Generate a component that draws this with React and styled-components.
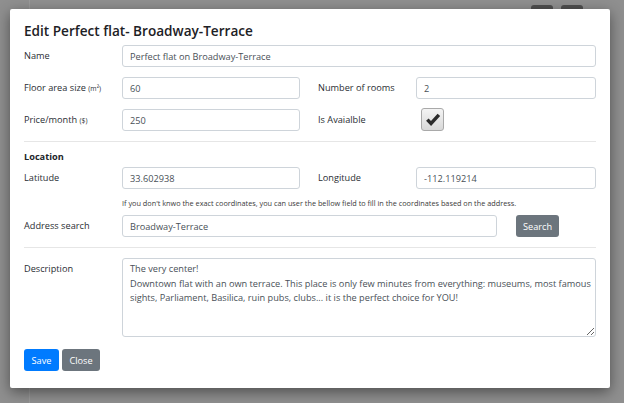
import React from "react";
import styled, { createGlobalStyle } from "styled-components";

const GlobalStyle = createGlobalStyle`
  html, body { margin: 0; padding: 0; }
  body {
    width: 624px;
    height: 403px;
    overflow: hidden;
    background: #8f8f8f;
    font-family: "Open Sans", "Noto Sans", sans-serif;
  }
  * { box-sizing: border-box; }
`;

const Page = styled.div`
  position: relative;
  width: 624px;
  height: 403px;
  display: flex;
  background: #8f8f8f;
`;

const Rail = styled.div`
  width: 30px;
  border-right: 1px solid #9a9a9a;
`;

const PageMain = styled.div`
  flex: 1;
  display: flex;
  justify-content: flex-end;
  align-items: flex-start;
  padding: 5px 41px 0 0;
  gap: 8px;
`;

const GhostBtn = styled.div`
  width: 22px;
  height: 20px;
  border-radius: 3px;
  background: #4f4f4f;
`;

const Modal = styled.div`
  position: absolute;
  left: 10px;
  top: 9px;
  width: 600px;
  height: 379px;
  background: #fff;
  border-radius: 2px;
  box-shadow: 0 4px 14px rgba(0, 0, 0, 0.45);
  padding: 13px 14px 18px 14px;
  display: flex;
  flex-direction: column;
  color: #212529;
  font-size: 9.2px;
`;

const Title = styled.h5`
  margin: 0 0 5px 0;
  font-size: 13.6px;
  line-height: 18px;
  font-weight: 600;
  color: #1d2125;
`;

const Row = styled.div`
  display: grid;
  grid-template-columns: 98px 178px 18px 98px 180px;
  grid-auto-rows: ${(p) => p.$h ?? 22}px;
  align-items: center;
  margin-top: ${(p) => p.$mt ?? 10}px;
`;

const Label = styled.label`
  grid-column: ${(p) => p.$col ?? "auto"};
  line-height: 14px;
  color: #2a2e33;
  align-self: ${(p) => (p.$top ? "start" : "center")};
  padding-top: ${(p) => (p.$top ? "4px" : "0")};
`;

const Small = styled.span`
  font-size: 6.8px;
`;

const Input = styled.input`
  grid-column: ${(p) => p.$span ?? "auto"};
  height: 22px;
  width: 100%;
  border: 1px solid #ced4da;
  border-radius: 3px;
  padding: 0 7px;
  font-family: inherit;
  font-size: 9.2px;
  color: #495057;
  background: #fff;
  outline: none;
`;

const CheckBox = styled.div`
  width: 23px;
  height: 23px;
  margin: -1px 0 0 5px;
  border: 1px solid #a9a9a9;
  border-radius: 3px;
  background: linear-gradient(#f4f4f4, #d8d8d8);
  display: flex;
  align-items: center;
  justify-content: center;
`;

const Divider = styled.hr`
  margin: 10px 0 0 0;
  border: 0;
  border-top: 1px solid #e6e6e6;
  height: 0;
`;

const SectionTitle = styled.div`
  margin-top: 8px;
  font-weight: 700;
  line-height: 14px;
`;

const Help = styled.div`
  margin: 9px 0 6px 98px;
  font-size: 7.3px;
  line-height: 11px;
  color: #3a3a3a;
  white-space: nowrap;
`;

const SearchRow = styled.div`
  display: grid;
  grid-template-columns: 98px 375px 62px;
  align-items: center;
`;

const SearchBtnWrap = styled.div`
  padding-left: 19px;
  display: flex;
`;

const Button = styled.button`
  height: 22px;
  width: ${(p) => p.$w}px;
  border: 0;
  border-radius: 3px;
  background: ${(p) => p.$bg};
  color: #fff;
  font-family: inherit;
  font-size: 9.2px;
  padding: 0;
  cursor: pointer;
`;

const TextArea = styled.textarea`
  grid-column: 2 / -1;
  height: 79px;
  width: 100%;
  border: 1px solid #ced4da;
  border-radius: 3px;
  padding: 3px 7px;
  font-family: inherit;
  font-size: 9.2px;
  line-height: 14.5px;
  color: #495057;
  resize: vertical;
  overflow: hidden;
  white-space: pre;
  outline: none;
`;

const Footer = styled.div`
  display: flex;
  gap: 3px;
  margin-top: 12px;
`;

const description =
  "The very center!\nDowntown flat with an own terrace. This place is only few minutes from everything: museums, most famous\nsights, Parliament, Basilica, ruin pubs, clubs... it is the perfect choice for YOU!";

export default function App() {
  return (
    <>
      <GlobalStyle />
      <Page>
        <Rail />
        <PageMain>
          <GhostBtn />
          <GhostBtn />
        </PageMain>
        <Modal>
          <Title>Edit Perfect flat- Broadway-Terrace</Title>
          <Row $mt={0}>
            <Label>Name</Label>
            <Input $span="2 / -1" defaultValue="Perfect flat on Broadway-Terrace" />
          </Row>
          <Row>
            <Label>
              Floor area size <Small>(m²)</Small>
            </Label>
            <Input defaultValue="60" />
            <Label $col="4">Number of rooms</Label>
            <Input defaultValue="2" />
          </Row>
          <Row>
            <Label>
              Price/month <Small>($)</Small>
            </Label>
            <Input defaultValue="250" />
            <Label $col="4">Is Avaialble</Label>
            <CheckBox>
              <svg width="16" height="14" viewBox="0 0 15 13">
                <path
                  d="M1 7.3 L3.4 5 L5.6 7.5 L11.8 0.6 L14.2 2.8 L5.7 12.2 Z"
                  fill="#2b2b2b"
                />
              </svg>
            </CheckBox>
          </Row>
          <Divider />
          <SectionTitle>Location</SectionTitle>
          <Row $mt={3}>
            <Label>Latitude</Label>
            <Input defaultValue="33.602938" />
            <Label $col="4">Longitude</Label>
            <Input defaultValue="-112.119214" />
          </Row>
          <Help>
            If you don't knwo the exact coordinates, you can user the bellow field to fill in the coordinates based on the address.
          </Help>
          <SearchRow>
            <Label>Address search</Label>
            <Input defaultValue="Broadway-Terrace" />
            <SearchBtnWrap>
              <Button $w={43} $bg="#6c757d">Search</Button>
            </SearchBtnWrap>
          </SearchRow>
          <Divider />
          <Row $h={79}>
            <Label $top>Description</Label>
            <TextArea wrap="off" defaultValue={description} />
          </Row>
          <Footer>
            <Button $w={35} $bg="#007bff">Save</Button>
            <Button $w={38} $bg="#6c757d">Close</Button>
          </Footer>
        </Modal>
      </Page>
    </>
  );
}
